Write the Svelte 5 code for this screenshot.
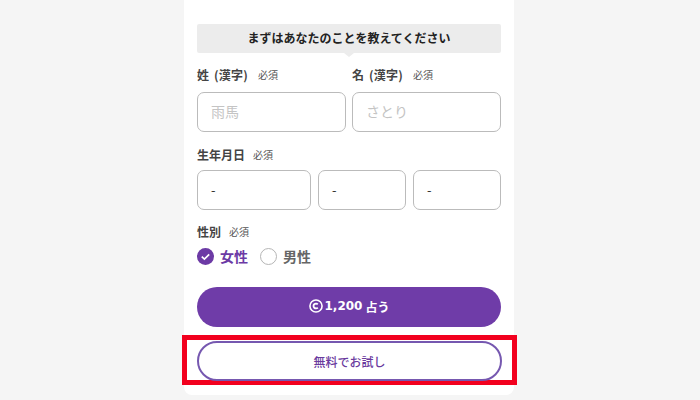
<script>
  const req = '必須';
</script>

<main class="card">
  <div class="banner">まずはあなたのことを教えてください</div>

  <div class="names">
    <div class="field">
      <div class="label spaced">姓 (漢字)<span class="req">{req}</span></div>
      <div class="input ph">雨馬</div>
    </div>
    <div class="field">
      <div class="label spaced">名 (漢字)<span class="req">{req}</span></div>
      <div class="input ph">さとり</div>
    </div>
  </div>

  <div class="label l2">生年月日<span class="req tight">{req}</span></div>
  <div class="birth">
    <div class="input dash">-</div>
    <div class="input dash">-</div>
    <div class="input dash">-</div>
  </div>

  <div class="label l3">性別<span class="req tight">{req}</span></div>
  <div class="radios">
    <div class="radio on">
      <svg viewBox="0 0 17 17" width="17" height="17" aria-hidden="true">
        <circle cx="8.5" cy="8.5" r="8.5" fill="#6c3aa5" />
        <path d="M4.8 8.6l2.6 2.5 4.8-4.7" fill="none" stroke="#fff" stroke-width="1.7" />
      </svg>
      <span>女性</span>
    </div>
    <div class="radio off">
      <svg viewBox="0 0 17 17" width="17" height="17" aria-hidden="true">
        <circle cx="8.5" cy="8.5" r="8" fill="#fff" stroke="#b5b5b5" />
      </svg>
      <span>男性</span>
    </div>
  </div>

  <button class="primary">
    <svg viewBox="0 0 15 15" width="14" height="14" aria-hidden="true">
      <circle cx="7.5" cy="7.5" r="6.5" fill="none" stroke="#fff" stroke-width="1.7" />
      <path d="M9.4 5.8a2.6 2.6 0 1 0 0 3.4" fill="none" stroke="#fff" stroke-width="1.9" />
    </svg>
    <span class="price">1,200</span>
    <span>占う</span>
  </button>

  <div class="highlight">
    <button class="secondary">無料でお試し</button>
  </div>
</main>

<style>
  :global(body) {
    margin: 0;
    background: #f5f5f5;
  }
  .card {
    box-sizing: border-box;
    width: 330px;
    height: 395px;
    margin-left: 184px;
    padding: 24px 13px 0;
    background: #fff;
    border-radius: 0 0 8px 8px;
    font-family: "Noto Sans CJK JP", "Noto Sans", sans-serif;
  }
  .banner {
    position: relative;
    height: 29px;
    line-height: 27px;
    text-align: center;
    font-size: 12px;
    font-weight: 700;
    color: #222;
    background: #ececec;
    border-radius: 2px;
  }
  .banner::after {
    content: '';
    position: absolute;
    left: 50%;
    bottom: -4px;
    margin-left: -5px;
    border: 5px solid transparent;
    border-bottom: 0;
    border-top: 4px solid #ececec;
  }
  .names {
    display: flex;
    gap: 6px;
    margin-top: 12px;
  }
  .field {
    flex: 1;
    min-width: 0;
  }
  .label {
    display: flex;
    align-items: center;
    height: 18px;
    font-size: 12px;
    font-weight: 700;
    color: #444;
  }
  .spaced {
    word-spacing: 2px;
    letter-spacing: 0.2px;
  }
  .req {
    margin-left: 10px;
    font-size: 10px;
    font-weight: 400;
    color: #555;
    letter-spacing: 0;
  }
  .tight {
    margin-left: 8px;
  }
  .input {
    box-sizing: border-box;
    height: 40px;
    margin-top: 9px;
    border: 1px solid #bbb;
    border-radius: 7px;
    background: #fff;
    line-height: 37px;
    padding-left: 13px;
    font-size: 14px;
  }
  .ph {
    color: #c4c4c4;
  }
  .l2 {
    margin-top: 13px;
  }
  .birth {
    display: grid;
    grid-template-columns: 114px 88px 88px;
    gap: 7px;
  }
  .birth .input {
    margin-top: 7px;
  }
  .dash {
    color: #333;
    font-size: 13px;
  }
  .l3 {
    margin-top: 12px;
  }
  .radios {
    display: flex;
    align-items: center;
    gap: 12px;
    margin-top: 7px;
    height: 18px;
    font-size: 14px;
    font-weight: 700;
  }
  .radio {
    display: flex;
    align-items: center;
    gap: 6px;
  }
  .on {
    color: #6c3aa5;
  }
  .off {
    color: #666;
  }
  button {
    display: flex;
    align-items: center;
    justify-content: center;
    box-sizing: border-box;
    width: 100%;
    height: 40px;
    padding: 0;
    border-radius: 20px;
    font-family: inherit;
  }
  .primary {
    gap: 2px;
    margin-top: 22px;
    padding-bottom: 2px;
    border: 0;
    background: #6f3ca8;
    color: #fff;
    font-size: 12px;
    font-weight: 700;
  }
  .price {
    margin-right: 1px;
    font-family: "DejaVu Sans", sans-serif;
    font-size: 12px;
  }
  .highlight {
    box-sizing: border-box;
    height: 50px;
    margin: 8px -16px 0 -15px;
    padding: 1px 10px;
    border: 5px solid #f2001e;
  }
  .secondary {
    border: 2px solid #7658b0;
    background: #fff;
    color: #6a3a9e;
    font-size: 12px;
    font-weight: 500;
  }
</style>
